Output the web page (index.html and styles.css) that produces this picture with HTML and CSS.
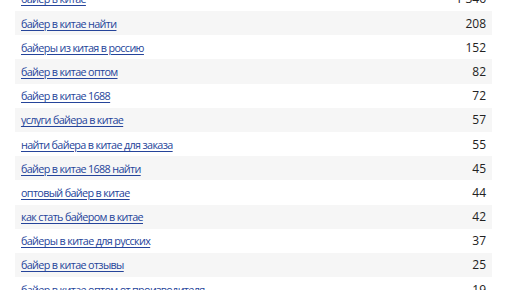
FILE: index.html
```html
<!DOCTYPE html>
<html lang="ru">
<head>
<meta charset="utf-8">
<link rel="stylesheet" href="styles.css">
</head>
<body>
<div class="table">
  <div class="row"><a class="phrase" href="#">байер в китае</a><span class="count">1 346</span></div>
  <div class="row"><a class="phrase" href="#">байер в китае найти</a><span class="count">208</span></div>
  <div class="row"><a class="phrase" href="#">байеры из китая в россию</a><span class="count">152</span></div>
  <div class="row"><a class="phrase" href="#">байер в китае оптом</a><span class="count">82</span></div>
  <div class="row"><a class="phrase" href="#">байер в китае 1688</a><span class="count">72</span></div>
  <div class="row"><a class="phrase" href="#">услуги байера в китае</a><span class="count">57</span></div>
  <div class="row"><a class="phrase" href="#">найти байера в китае для заказа</a><span class="count">55</span></div>
  <div class="row"><a class="phrase" href="#">байер в китае 1688 найти</a><span class="count">45</span></div>
  <div class="row"><a class="phrase" href="#">оптовый байер в китае</a><span class="count">44</span></div>
  <div class="row"><a class="phrase" href="#">как стать байером в китае</a><span class="count">42</span></div>
  <div class="row"><a class="phrase" href="#">байеры в китае для русских</a><span class="count">37</span></div>
  <div class="row"><a class="phrase" href="#">байер в китае отзывы</a><span class="count">25</span></div>
  <div class="row"><a class="phrase" href="#">байер в китае оптом от производителя</a><span class="count">19</span></div>
</div>
</body>
</html>
```
FILE: styles.css
```css
html, body {
  margin: 0;
  padding: 0;
  background: #fff;
}
body {
  font-family: "Open Sans", "DejaVu Sans", sans-serif;
  font-size: 12px;
  color: #222;
  overflow: hidden;
}
.table {
  margin: -13.2px 24px 0 15px;
  display: flex;
  flex-direction: column;
}
.row {
  height: 24.2px;
  display: flex;
  align-items: center;
  justify-content: space-between;
  padding: 0 6px;
}
.row:nth-child(even) {
  background: #f6f6f6;
}
.phrase {
  color: #25449a;
  text-decoration: underline;
  text-underline-offset: 2px;
  font-size: 10.8px;
  letter-spacing: -0.65px;
}
.count {
  color: #222;
}
```
